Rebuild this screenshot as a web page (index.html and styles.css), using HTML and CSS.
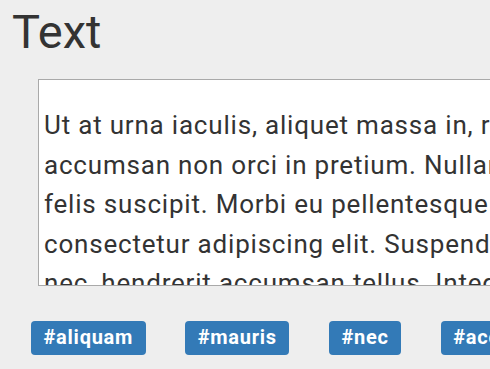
FILE: index.html
```html
<!DOCTYPE html>
<html>
    <head>
        <title>Text</title>
        <link rel="stylesheet" href="styles.css">
    </head>
    <body>
        <div class="page">
            <h1 class="page-title">Text</h1>

            <div class="text-box">
                <p>
                    Ut at urna iaculis, aliquet massa in, rhoncus nunc. Donec<br>
                    accumsan non orci in pretium. Nullam vel dictum<br>
                    felis suscipit. Morbi eu pellentesque nisl. Lorem ipsum<br>
                    consectetur adipiscing elit. Suspendisse potenti. Sed<br>
                    nec, hendrerit accumsan tellus. Integer vitae
                </p>
            </div>

            <!-- hashtags -->
            <div class="tag-row">
                <span class="tag">#aliquam</span>
                <span class="tag">#mauris</span>
                <span class="tag">#nec</span>
                <span class="tag">#accumsan</span>
                <span class="tag">#tellus</span>
            </div>
        </div>
    </body>
</html>
```

FILE: styles.css
```css
html, body {
    margin: 0;
    padding: 0;
    overflow: hidden;
}

body {
    background-color: #eeeeee;
    font-family: Roboto, "Noto Sans", sans-serif;
    color: #333333;
}

.page {
    padding-left: 12px;
    width: 900px;
}

.page-title {
    font-size: 47px;
    font-weight: 400;
    line-height: 56px;
    margin: 4px 0 0 0;
}

.text-box {
    margin: 19px 0 0 26px;
    width: 700px;
    height: 205px;
    overflow: hidden;
    background-color: #ffffff;
    border: 1px solid #a9a9a9;
    padding: 0 0 0 5px;
    box-sizing: content-box;
}
.text-box p {
    margin: 26px 0 0 0;
    font-size: 26px;
    letter-spacing: 0.8px;
    line-height: 39.5px;
    white-space: nowrap;
}

.tag-row {
    display: flex;
    flex-direction: row;
    gap: 39.5px;
    margin: 35px 0 0 19px;
}

.tag {
    display: block;
    height: 34px;
    line-height: 33px;
    padding: 0 12.5px;
    border-radius: 4px;
    background-color: #337ab7;
    color: #ffffff;
    font-size: 20px;
    font-weight: 700;
    letter-spacing: 0.75px;
    white-space: nowrap;
}
```
